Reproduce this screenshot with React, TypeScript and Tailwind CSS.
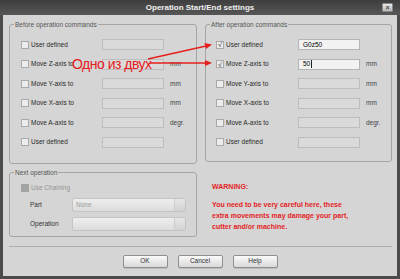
type Row = { label: string; value?: string; unit?: string; checked?: boolean; active?: boolean }

const beforeRows: Row[] = [
  { label: "User defined" },
  { label: "Move Z-axis to", unit: "mm" },
  { label: "Move Y-axis to", unit: "mm" },
  { label: "Move X-axis to", unit: "mm" },
  { label: "Move A-axis to", unit: "degr." },
  { label: "User defined" },
]

const afterRows: Row[] = [
  { label: "User defined", value: "G0z50", checked: true, active: true },
  { label: "Move Z-axis to", value: "50", unit: "mm", checked: true, active: true },
  { label: "Move Y-axis to", unit: "mm" },
  { label: "Move X-axis to", unit: "mm" },
  { label: "Move A-axis to", unit: "degr." },
  { label: "User defined" },
]

function Check({ checked }: { checked?: boolean }) {
  return (
    <span className="flex h-[8px] w-[8px] shrink-0 items-center justify-center border border-[#a9a9a9] bg-[#ececec] text-[7px] leading-none text-[#333]">
      {checked ? "√" : ""}
    </span>
  )
}

function CommandRow({ row, labelW }: { row: Row; labelW: string }) {
  return (
    <div className="flex h-[19.5px] items-center">
      <Check checked={row.checked} />
      <span className={`ml-[1px] pl-[1px] ${labelW} text-[#2a2a2a]`}>{row.label}</span>
      <div
        className={`flex h-[11px] w-[62px] items-center border px-[4px] ${
          row.active ? "border-[#b5b5b5] bg-[#f2f2f2]" : "border-[#bdbdbd] bg-[#dadada]"
        }`}
      >
        {row.value}
        {row.value === "50" && <span className="ml-[1px] h-[8px] w-[1px] bg-[#222]" />}
      </div>
      <span className="ml-[6px] text-[#444]">{row.unit}</span>
    </div>
  )
}

function Group({ title, children, className }: { title: string; children: React.ReactNode; className: string }) {
  return (
    <div className={`relative rounded-[3px] border border-[#a5a5a5] ${className}`}>
      <span className="absolute -top-[5px] left-[4px] bg-[#d5d5d5] px-[1px] leading-[9px] text-[#555]">{title}</span>
      {children}
    </div>
  )
}

function Combo({ text }: { text?: string }) {
  return (
    <div className="flex h-[14px] w-[114px] rounded-[2px] border border-[#c4c4c4] bg-gradient-to-b from-[#eeeeee] to-[#dcdcdc]">
      <span className="flex-1 pl-[3px] leading-[12px] text-[#9a9a9a]">{text}</span>
      <span className="w-[11px] border-l border-[#cfcfcf] bg-gradient-to-b from-[#e6e6e6] to-[#d2d2d2]" />
    </div>
  )
}

function Button({ label }: { label: string }) {
  return (
    <button className="h-[13px] w-[45px] rounded-[2px] border border-[#8f8f8f] bg-gradient-to-b from-[#fafafa] to-[#d8d8d8] text-[6.5px] leading-none text-[#333] shadow-[0_1px_0_#bcbcbc]">
      {label}
    </button>
  )
}

export default function App() {
  return (
    <div
      className="relative flex h-[279px] w-[400px] flex-col bg-[#4b4b4b] text-[6.5px] leading-none"
      style={{ fontFamily: '"Liberation Sans", Arial, sans-serif' }}
    >
      {/* title bar */}
      <div className="relative flex h-[15px] items-center justify-center bg-gradient-to-b from-[#3e3e3e] to-[#575757]">
        <span className="text-[8px] font-bold text-[#f0f0f0]">Operation Start/End settings</span>
        <span className="absolute right-[7px] top-[3px] flex h-[9px] w-[11px] items-center justify-center rounded-[1px] border border-[#8a8a8a] bg-gradient-to-b from-[#e8e8e8] to-[#b8b8b8] text-[7px] font-bold leading-none text-[#444]">
          ×
        </span>
      </div>

      {/* body */}
      <div className="mx-[3px] mb-[3px] flex flex-1 flex-col bg-[#d5d5d5] pl-[6px] pr-[5px] pt-[9px]">
        <div className="flex gap-[8px]">
          <Group title="Before operation commands" className="h-[140px] w-[188px] pl-[11px] pt-[10px]">
            {beforeRows.map((r, i) => (
              <CommandRow key={i} row={r} labelW="w-[72px]" />
            ))}
          </Group>
          <Group title="After operation commands" className="h-[138px] w-[187px] pl-[10px] pt-[10px]">
            {afterRows.map((r, i) => (
              <CommandRow key={i} row={r} labelW="w-[73px]" />
            ))}
          </Group>
        </div>

        <div className="mt-[8px] flex gap-[15px]">
          <Group title="Next operation" className="h-[65px] w-[188px] pl-[11px] pt-[11px]">
            <div className="flex items-center gap-[2px]">
              <span className="h-[8px] w-[8px] bg-[#a3a3a3]" />
              <span className="text-[#939393]">Use Chaining</span>
            </div>
            <div className="mt-[6px] flex items-center">
              <span className="w-[51px] pl-[9px] text-[#333]">Part</span>
              <Combo text="None" />
            </div>
            <div className="mt-[5px] flex items-center">
              <span className="w-[51px] pl-[9px] text-[#333]">Operation</span>
              <Combo />
            </div>
          </Group>
          <div className="pt-[11px] text-[7px] font-bold text-[#e3231f]">
            <div>WARNING:</div>
            <div className="mt-[9px] leading-[11px]">
              You need to be very careful here, these
              <br />
              extra movements may damage your part,
              <br />
              cutter and/or machine.
            </div>
          </div>
        </div>

        <div className="mt-[9px] border-t border-[#adadad]" />

        <div className="mt-[8px] flex justify-center gap-[10px] pr-[1px]">
          <Button label="OK" />
          <Button label="Cancel" />
          <Button label="Help" />
        </div>
      </div>

      {/* annotation */}
      <span className="absolute left-[72px] top-[57px] text-[14px] leading-none tracking-[-0.5px] text-[#e5201c]">
        Одно из двух
      </span>
      <svg className="pointer-events-none absolute left-0 top-0" width="400" height="279">
        <g stroke="#e5201c" strokeWidth="1.3" fill="#e5201c">
          <line x1="148" y1="59" x2="206" y2="46" />
          <line x1="150" y1="63" x2="206" y2="63" />
          <polygon points="212,44.5 204.5,43 206,49" stroke="none" />
          <polygon points="212,63 205,60 205,66" stroke="none" />
        </g>
      </svg>
    </div>
  )
}
